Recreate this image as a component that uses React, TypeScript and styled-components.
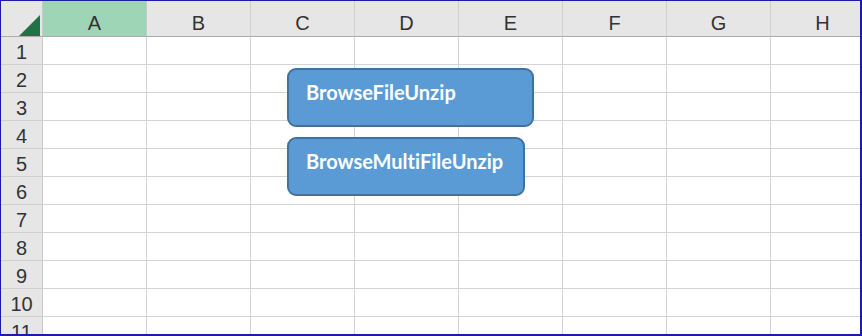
import styled, { createGlobalStyle } from 'styled-components';

const Global = createGlobalStyle`
  html, body { margin: 0; padding: 0; background: #fff; }
  body { width: 862px; height: 336px; overflow: hidden; }
`;

const COLS = ['A', 'B', 'C', 'D', 'E', 'F', 'G', 'H'];
const ROWS = [1, 2, 3, 4, 5, 6, 7, 8, 9, 10, 11];

const Frame = styled.div`
  position: relative;
  width: 862px;
  height: 336px;
  box-sizing: border-box;
  border-style: solid;
  border-color: #1c1caa;
  border-width: 1px 2px 2px 1px;
  overflow: hidden;
  background: #fff;
`;

const Sheet = styled.div`
  display: grid;
  grid-template-columns: 42px repeat(8, 104px);
  grid-template-rows: 36px repeat(11, 28px);
  font-family: "Liberation Sans", Arial, sans-serif;
`;

const Corner = styled.div`
  position: relative;
  background: #e6e6e6;
  border-right: 1px solid #c8c8c8;
  border-bottom: 1px solid #ababab;
`;

const Triangle = styled.svg`
  position: absolute;
  left: 18px;
  top: 14px;
`;

const ColHead = styled.div<{ $active?: boolean }>`
  display: flex;
  align-items: center;
  justify-content: center;
  background: ${p => (p.$active ? '#9fd5b7' : '#e6e6e6')};
  border-right: 1px solid ${p => (p.$active ? '#c8c8c8' : '#d0d0d0')};
  border-bottom: 1px solid #ababab;
  font-size: 20px;
  color: #333;
  padding-top: 10px;
  box-sizing: border-box;
`;

const RowHead = styled.div`
  display: flex;
  align-items: center;
  justify-content: center;
  background: #e6e6e6;
  border-right: 1px solid #c8c8c8;
  border-bottom: 1px solid #d0d0d0;
  font-size: 20px;
  color: #333;
  padding-top: 4px;
  box-sizing: border-box;
`;

const Cell = styled.div`
  border-right: 1px solid #d4d4d4;
  border-bottom: 1px solid #d4d4d4;
  box-sizing: border-box;
`;

const Shape = styled.div<{ $left: number; $top: number; $w: number }>`
  position: absolute;
  left: ${p => p.$left}px;
  top: ${p => p.$top}px;
  width: ${p => p.$w}px;
  height: 59px;
  box-sizing: border-box;
  background: #5b9bd5;
  border: 2px solid #41719c;
  border-radius: 9px;
  padding: 10px 0 0 17px;
  color: #fff;
  font-family: Lato, "Open Sans", sans-serif;
  font-weight: 700;
  font-size: 20px;
  line-height: 24px;
  font-variant-ligatures: none;
`;

export default function App() {
  return (
    <>
      <Global />
      <Frame>
        <Sheet>
          <Corner>
            <Triangle width="21" height="21" viewBox="0 0 21 21">
              <polygon points="21,0 21,21 0,21" fill="#217346" />
            </Triangle>
          </Corner>
          {COLS.map(c => (
            <ColHead key={c} $active={c === 'A'}>{c}</ColHead>
          ))}
          {ROWS.map(r => (
            <>
              <RowHead key={'h' + r}>{r}</RowHead>
              {COLS.map(c => (
                <Cell key={c + r} />
              ))}
            </>
          ))}
        </Sheet>
        <Shape $left={286} $top={67} $w={247}>BrowseFileUnzip</Shape>
        <Shape $left={286} $top={136} $w={238}>BrowseMultiFileUnzip</Shape>
      </Frame>
    </>
  );
}
